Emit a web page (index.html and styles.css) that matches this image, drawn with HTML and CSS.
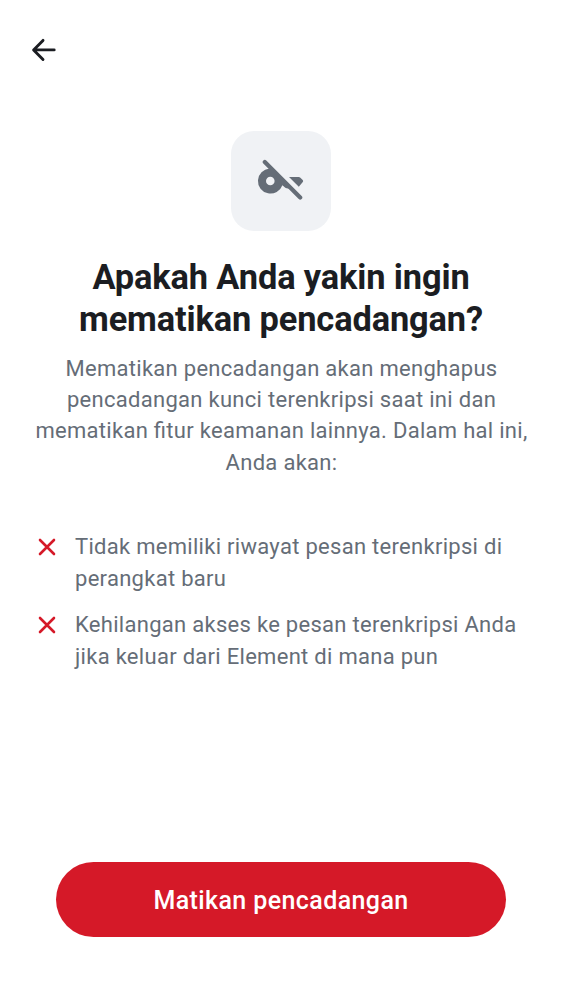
FILE: index.html
```html
<!DOCTYPE html>
<html lang="id">
<head>
<meta charset="utf-8">
<title>Matikan pencadangan</title>
<link rel="stylesheet" href="styles.css">
</head>
<body>
<main class="screen">
  <header class="topbar">
    <svg class="back" viewBox="0 0 25 25" aria-label="Kembali"><path d="M12 3.4 2.6 12.9l9.4 9.5M2.8 12.9h20.4"/></svg>
  </header>
  <section class="hero">
    <div class="tile">
      <svg class="key" viewBox="0 0 50 44"><path class="fill" fill-rule="evenodd" d="M15.3 9.4 34.5 29.2q-3.2.8-5.2-.4l-2.9-2.6A12.6 12.6 0 1 1 13.5 9.4zM14.3 17.7a4.3 4.3 0 1 0 0 8.6 4.3 4.3 0 0 0 0-8.6z"/><path class="fill" d="M33 17.9h9.7q1 0 1.7.8l2.3 2.3q.9.9.1 1.9l-4 4.9z"/><path class="bar" d="m8.8 2.9 35.4 35.7"/></svg>
    </div>
    <h1 class="title">Apakah Anda yakin ingin<br>mematikan pencadangan?</h1>
    <p class="text intro">Mematikan pencadangan akan menghapus<br>pencadangan kunci terenkripsi saat ini dan<br>mematikan fitur keamanan lainnya. Dalam hal ini,<br>Anda akan:</p>
  </section>
  <ul class="list">
    <li class="item"><svg class="cross" viewBox="0 0 18 18"><path d="m2 2 14 14M16 2 2 16"/></svg><span class="text">Tidak memiliki riwayat pesan terenkripsi di<br>perangkat baru</span></li>
    <li class="item"><svg class="cross" viewBox="0 0 18 18"><path d="m2 2 14 14M16 2 2 16"/></svg><span class="text">Kehilangan akses ke pesan terenkripsi Anda<br>jika keluar dari Element di mana pun</span></li>
  </ul>
  <button class="action">Matikan pencadangan</button>
</main>
</body>
</html>
```
FILE: styles.css
```css
* { box-sizing: border-box; }
body { margin: 0; background: #fff; font-family: Roboto, sans-serif; }
.screen { display: flex; flex-direction: column; height: 1000px; padding: 37px 31px 62.6px; }
.topbar { display: flex; height: 94px; }
.back { width: 25px; height: 25px; fill: none; stroke: #1b1d22; stroke-width: 2.9; stroke-linecap: round; stroke-linejoin: round; }
.hero { display: flex; flex-direction: column; align-items: center; text-align: center; }
.tile { display: flex; align-items: center; justify-content: center; width: 100px; height: 100px; border-radius: 23px; background: #f0f2f5; }
.key { width: 50px; height: 44px; }
.fill { fill: #656d77; }
.bar { fill: none; stroke: #656d77; stroke-width: 4.2; stroke-linecap: round; }
.title { margin: 25px 0 0; font-size: 34.4px; line-height: 42px; font-weight: 700; letter-spacing: -.13px; color: #1b1d22; white-space: nowrap; }
.text { font-size: 22px; line-height: 31.2px; letter-spacing: .29px; font-feature-settings: "liga" 1; color: #656d77; white-space: nowrap; }
.intro { margin: 13px 0 0; padding-left: 1px; }
.list { display: flex; flex-direction: column; gap: 15.6px; margin: 53.6px 0 0; padding: 0 7px; list-style: none; }
.item { display: flex; gap: 19px; }
.cross { width: 18px; height: 18px; margin-top: 6.6px; fill: none; stroke: #d51928; stroke-width: 2.6; stroke-linecap: round; }
.action { height: 75px; margin: auto 25px 0; padding: 1px 0 0; border: 0; border-radius: 38px; background: #d51928; color: #fff; font: 500 25px Roboto, sans-serif; letter-spacing: .4px; }
```
